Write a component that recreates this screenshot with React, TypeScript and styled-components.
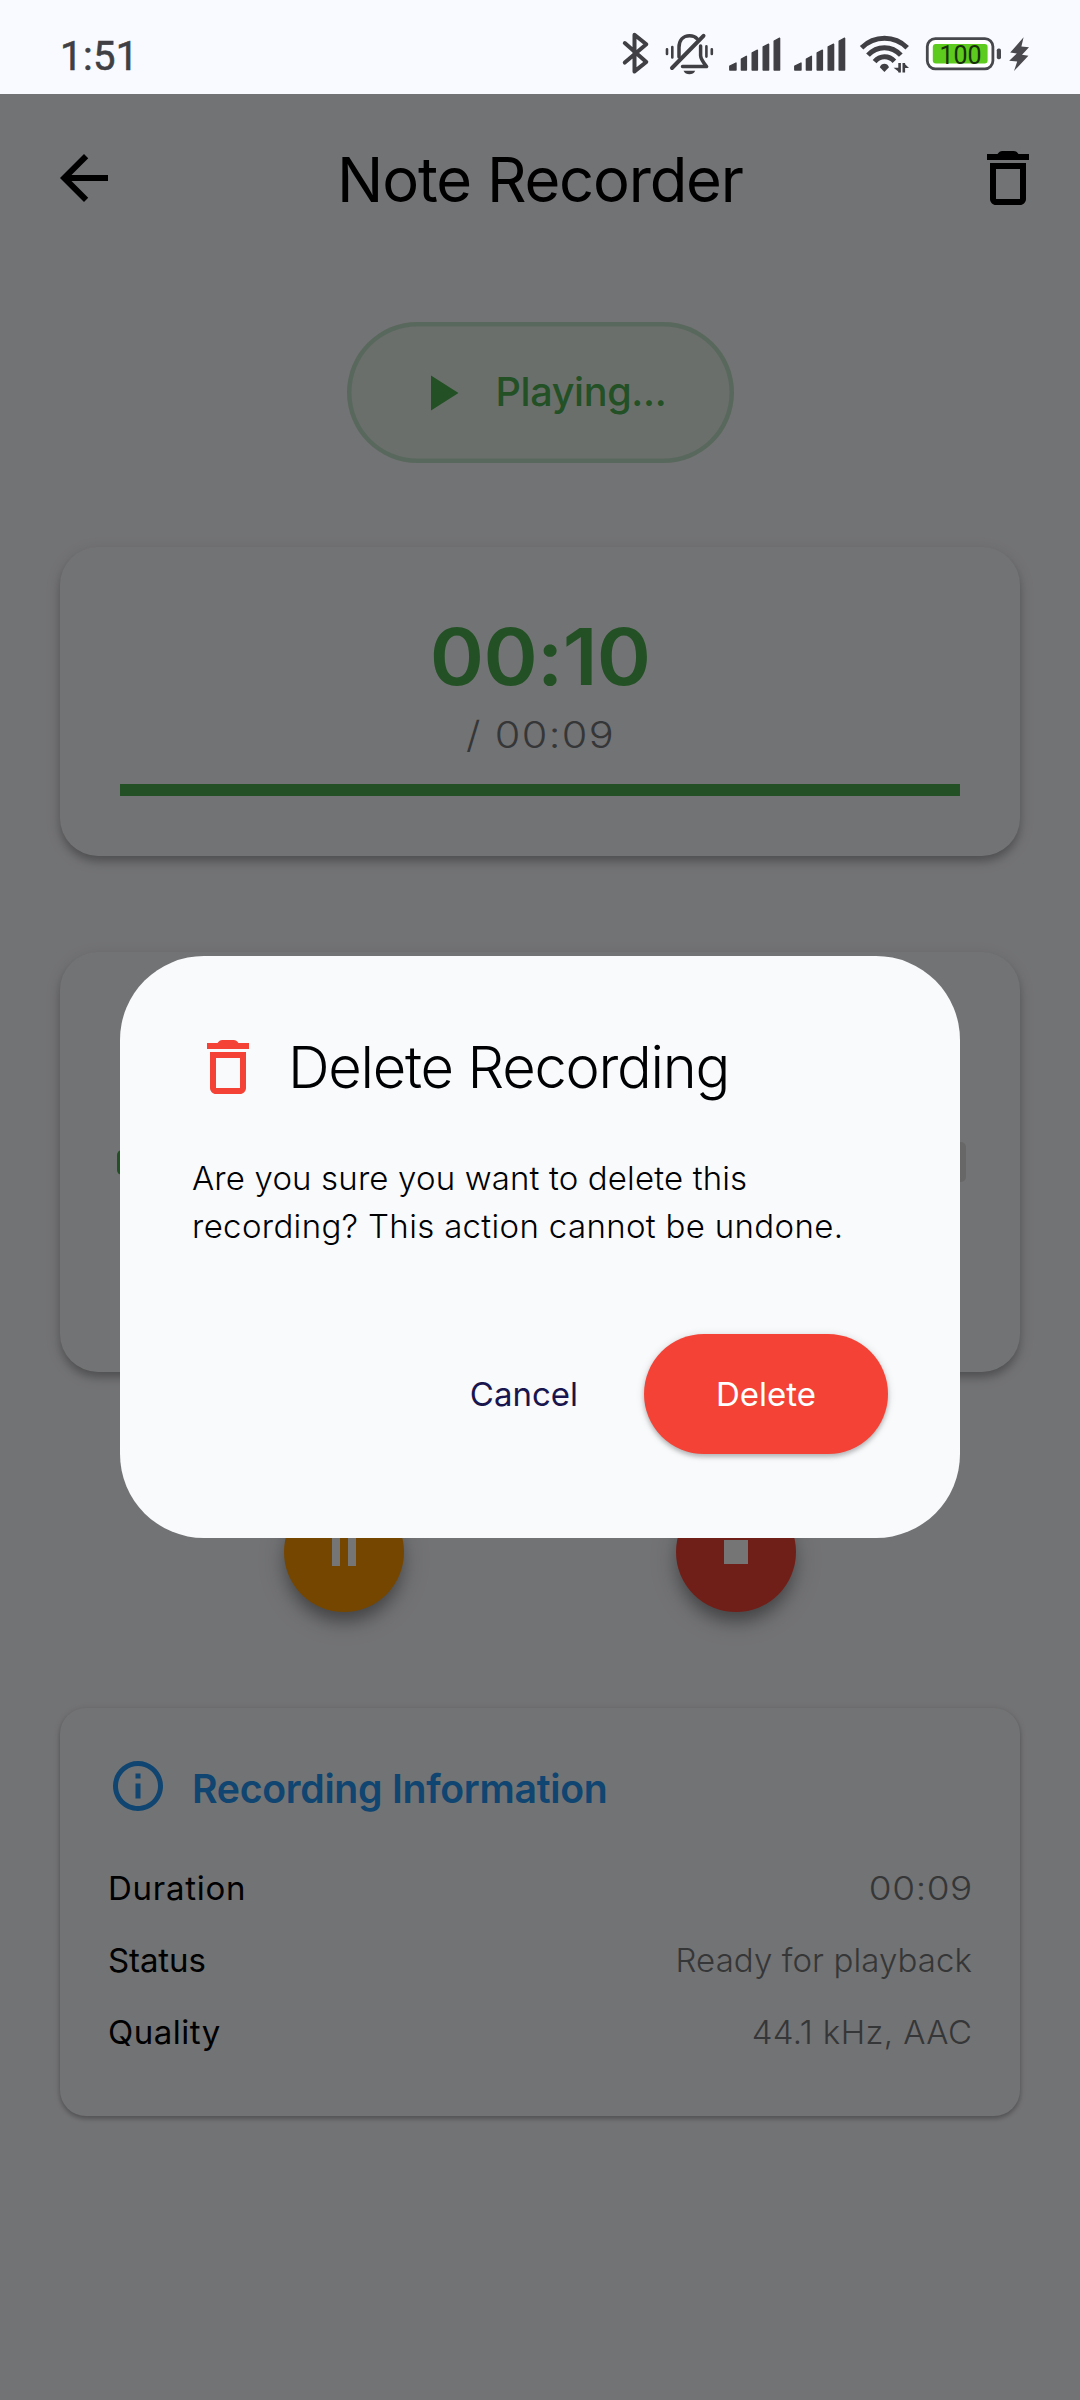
import React from "react";
import styled, { createGlobalStyle } from "styled-components";

const GlobalStyle = createGlobalStyle`
  *, *::before, *::after { box-sizing: border-box; }
  body { margin: 0; background: #f9faff; }
`;

const ink = "#3f3f44";

const Screen = styled.div`
  position: relative;
  display: flex;
  flex-direction: column;
  width: 1080px;
  height: 2400px;
  overflow: hidden;
  background: #f9fafe;
  font-family: "Inter", "Roboto", sans-serif;
  color: #000103;
`;

const Label = styled.span<{
  $size: number;
  $weight?: number;
  $track?: number;
  $line?: number;
  $color?: string;
  $stretch?: number;
  $origin?: string;
}>`
  display: block;
  margin-right: ${(p) => -(p.$track ?? 0)}px;
  font-size: ${(p) => p.$size}px;
  font-weight: ${(p) => p.$weight ?? 400};
  letter-spacing: ${(p) => p.$track ?? 0}px;
  line-height: ${(p) => (p.$line ? `${p.$line}px` : "1.2")};
  color: ${(p) => p.$color ?? "inherit"};
  white-space: pre;
  transform: ${(p) => (p.$stretch ? `scaleX(${p.$stretch})` : "none")};
  transform-origin: ${(p) => p.$origin ?? "center"};
`;

/* Status bar */

const StatusBar = styled.header`
  display: flex;
  justify-content: space-between;
  flex: none;
  height: 94px;
  padding: 32px 50px 0 60px;
  background: #f9faff;
`;

const Clock = styled.span`
  padding-top: 1px;
  font: 400 40px/48px "Roboto", sans-serif;
  letter-spacing: 0.4px;
  color: ${ink};
  -webkit-text-stroke: 0.6px ${ink};
`;

const StatusIcons = styled.div`
  display: flex;
  align-items: flex-start;
`;

const StatusGlyph = styled.svg<{ $gap?: number }>`
  display: block;
  height: 44px;
  margin-left: ${(p) => p.$gap ?? 0}px;
  overflow: visible;
`;

const Signal = ({ gap }: { gap: number }) => (
  <StatusGlyph $gap={gap} width="52" viewBox="0 0 52 44" fill={ink} stroke={ink} strokeWidth="1.4" strokeLinejoin="round">
    <path d="M0.8 38V34.2L7 31V38ZM12.4 38V27L17.4 24.3V38ZM23.2 38V20.8L28.4 18.2V38ZM34.2 38V14.8L39.6 12.2V38ZM45.2 38V9L50.6 6.2V38Z" />
  </StatusGlyph>
);

const StatusRow = () => (
  <StatusBar>
    <Clock>1:51</Clock>
    <StatusIcons>
      <StatusGlyph width="28" viewBox="0 0 28 44" fill="none" stroke={ink} strokeWidth="4" strokeLinecap="round" strokeLinejoin="round">
        <path d="M2.8 11L24.3 30L12.5 39.4V2.8L24.3 12.3L2.8 30.6" />
      </StatusGlyph>
      <StatusGlyph $gap={15} width="49" viewBox="0 0 49 44" fill="none" stroke={ink} strokeWidth="3.5" strokeLinecap="round" strokeLinejoin="round">
        <path d="M14 25V15.5C14 8.5 18 3.8 24.6 3.8C27.8 3.8 30.4 4.8 32.2 6.8" />
        <path d="M35.6 14V23.5C35.6 27 37.6 29.6 41.6 34.6H17.5" />
        <path d="M7 36L38.5 3.8" strokeWidth="4" />
        <path d="M2 17.2V22M7.3 15V25.4M41.4 14.4V24.6M46.8 17.2V22" strokeWidth="2.6" />
        <path d="M18.5 38.8H30.2C29 41.4 27 42.2 24.4 42.2S19.8 41.4 18.5 38.8Z" fill={ink} stroke="none" />
      </StatusGlyph>
      <Signal gap={15} />
      <Signal gap={13} />
      <StatusGlyph $gap={13} width="51" viewBox="0 0 51 44" fill="none" stroke={ink} strokeWidth="5">
        <path d="M2.6 15.8C15.5 3.2 35.5 3.2 48.2 15.8" />
        <path d="M9 23.2C18 13.2 32.8 13.2 41.8 23.2" />
        <path d="M15.6 29.6C21 23.2 29.8 23.2 35.4 29.2" />
        <path d="M20.8 35.2C22.4 30.6 28.4 30.6 30 35.2L25.4 40Z" fill={ink} stroke="none" />
        <path d="M40.6 31V40.6M44.8 31V40.6" strokeWidth="2.6" />
        <path d="M40.6 40.6L34.6 35.8H40.6ZM44.8 31L50 36H44.8Z" fill={ink} stroke="none" />
      </StatusGlyph>
      <StatusGlyph $gap={16} width="76" viewBox="0 0 76 44">
        <rect x="1.3" y="6.6" width="65.6" height="30.2" rx="8" fill="#fff" stroke="#47484d" strokeWidth="2.8" />
        <rect x="6.8" y="12" width="54.8" height="19.4" rx="3" fill="#5ccb1d" />
        <rect x="70.8" y="16.4" width="4.2" height="10.8" rx="1.8" fill="#47484d" />
        <text x="34.6" y="32" textAnchor="middle" fontFamily="Roboto, sans-serif" fontSize="25" fill="#18300b">100</text>
      </StatusGlyph>
      <StatusGlyph $gap={6} width="22" viewBox="0 0 22 44" fill="#4a4a4e">
        <path d="M15.6 5.2L13.4 14.6L21 15.2L14 22.8L20.4 23.8L6 39L9.2 29.6L1.2 28.8L8.8 21.4L2.2 20.6Z" />
      </StatusGlyph>
    </StatusIcons>
  </StatusBar>
);

/* Material glyphs */

const Icon = styled.svg<{ $size: number }>`
  display: block;
  flex: none;
  width: ${(p) => p.$size}px;
  height: ${(p) => p.$size}px;
  fill: currentColor;
`;

const TrashIcon = () => (
  <Icon $size={72} viewBox="0 0 24 24">
    <path d="M6 19c0 1.1.9 2 2 2h8c1.1 0 2-.9 2-2V7H6v12zM8 9h8v10H8V9zM15.5 4c-.5-.7-.9-1-1.6-1h-3.8c-.7 0-1.1.3-1.6 1H5v2h14V4h-3.5z" />
  </Icon>
);

/* Page */

const TopBar = styled.nav`
  display: flex;
  align-items: center;
  justify-content: space-between;
  flex: none;
  height: 168px;
  padding: 0 36px 0 48px;
`;

const Title = styled.h1`
  margin: 0;
  padding: 3px 11px 0 0;
`;

const Content = styled.main`
  display: flex;
  flex-direction: column;
  padding: 60px 60px 0;
`;

const StatusPill = styled.div`
  display: flex;
  align-items: center;
  align-self: center;
  gap: 25px;
  width: 387px;
  height: 141px;
  padding-left: 64px;
  border-radius: 71px;
  background: rgba(76, 175, 80, 0.1);
  box-shadow: inset 0 0 0 4.5px rgba(76, 175, 80, 0.23);
  color: #4caf50;
`;

const Card = styled.section<{ $height: number; $top: number; $low?: boolean }>`
  display: flex;
  flex-direction: column;
  height: ${(p) => p.$height}px;
  margin-top: ${(p) => p.$top}px;
  padding: ${(p) => (p.$low ? "48px" : "60px")};
  border-radius: ${(p) => (p.$low ? 26 : 38)}px;
  background: #f9fafc;
  box-shadow: ${(p) =>
    p.$low
      ? "0 3px 4px rgba(0,0,0,.2), 0 1px 7px rgba(0,0,0,.14)"
      : "0 6px 8px -1px rgba(0,0,0,.24), 0 4px 16px rgba(0,0,0,.12)"};
`;

const Times = styled.div`
  display: flex;
  flex-direction: column;
  align-items: center;
`;

const Progress = styled.div`
  height: 12px;
  margin-top: 21px;
  background: #4caf50;
`;

const Wave = styled.div`
  display: flex;
  align-items: center;
  justify-content: space-between;
  height: 300px;
  margin: 0 -6px 0 -3px;
`;

const WaveBar = styled.i<{ $height: number; $played: boolean }>`
  width: 12px;
  height: ${(p) => p.$height}px;
  border-radius: 5px;
  background: ${(p) => (p.$played ? "#4caf50" : "#e0e1e3")};
`;

const Controls = styled.div`
  display: flex;
  justify-content: center;
  gap: 272px;
  margin-top: 120px;
`;

const RoundButton = styled.button<{ $color: string }>`
  display: flex;
  align-items: center;
  justify-content: center;
  width: 120px;
  height: 120px;
  padding: 0;
  border: 0;
  border-radius: 50%;
  background: ${(p) => p.$color};
  color: #fff;
  box-shadow: 0 12px 16px -3px rgba(0, 0, 0, 0.3), 0 8px 28px rgba(0, 0, 0, 0.18);
`;

const InfoHeading = styled.div`
  display: flex;
  align-items: center;
  gap: 24px;
  height: 60px;
  margin-bottom: 36px;
  color: #2196f3;
`;

const HeadingText = styled.div`
  padding-top: 6px;
`;

const InfoRow = styled.div`
  display: flex;
  align-items: center;
  justify-content: space-between;
  height: 72px;
  padding-top: 1px;
`;

/* Dialog */

const Scrim = styled.div`
  position: absolute;
  inset: 94px 0 0;
  display: flex;
  align-items: center;
  justify-content: center;
  background: rgba(0, 0, 0, 0.54);
`;

const Dialog = styled.div`
  display: flex;
  flex-direction: column;
  width: 840px;
  height: 582px;
  padding: 75px 72px 84px;
  border-radius: 84px;
  background: #f9fafc;
`;

const DialogTitle = styled.div`
  display: flex;
  align-items: center;
  gap: 24px;
  height: 72px;
  margin-bottom: 51px;
`;

const DialogHeading = styled.h2`
  margin: 0;
  padding-top: 2px;
`;

const RedIcon = styled.span`
  color: #f44336;
`;

const Actions = styled.div`
  display: flex;
  align-items: center;
  justify-content: flex-end;
  gap: 30px;
  margin-top: auto;
`;

const TextButton = styled.button`
  height: 120px;
  padding: 1px 36px 0;
  border: 0;
  background: none;
  font-family: inherit;
  color: #19164f;
`;

const FilledButton = styled.button`
  display: flex;
  align-items: center;
  justify-content: center;
  width: 244px;
  height: 120px;
  padding: 1px 0 0;
  border: 0;
  border-radius: 60px;
  background: #f44336;
  font-family: inherit;
  color: #fff;
  box-shadow: 0 3px 4px rgba(0, 0, 0, 0.2), 0 1px 8px rgba(0, 0, 0, 0.14);
`;

const waveform = Array.from({ length: 40 }, (_, i) =>
  i === 0 ? 25 : i === 39 ? 40 : 40 + Math.round(70 * Math.abs(Math.sin(i * 0.7)))
);

const details = [
  { name: "Duration", nameTrack: 0.73, value: "00:09", valueTrack: 0.5, stretch: 1.12 },
  { name: "Status", nameTrack: -0.1, value: "Ready for playback", valueTrack: 0.1 },
  { name: "Quality", nameTrack: 0.5, value: "44.1 kHz, AAC", valueTrack: 0.4 },
];

export default function App() {
  return (
    <Screen>
      <GlobalStyle />
      <StatusRow />
      <TopBar>
        <Icon $size={72} viewBox="0 0 24 24">
          <path d="M20 11H7.83l5.59-5.59L12 4l-8 8 8 8 1.41-1.41L7.83 13H20v-2z" />
        </Icon>
        <Title>
          <Label $size={61.5} $track={-1.2}>Note Recorder</Label>
        </Title>
        <TrashIcon />
      </TopBar>

      <Content>
        <StatusPill>
          <Icon $size={60} viewBox="0 0 24 24">
            <path d="M8 5v14l11-7z" />
          </Icon>
          <Label $size={39.6} $weight={550} $track={-0.35}>Playing...</Label>
        </StatusPill>

        <Card $height={309} $top={84}>
          <Times>
            <Label $size={78.4} $weight={570} $track={-0.6} $line={99} $stretch={1.05} $color="#4caf50">00:10</Label>
            <Label $size={37} $weight={300} $track={1.2} $line={57} $stretch={1.12} $color="#757678">/ 00:09</Label>
          </Times>
          <Progress />
        </Card>

        <Card $height={420} $top={96}>
          <Wave>
            {waveform.map((h, i) => (
              <WaveBar key={i} $height={h} $played={i < 39} />
            ))}
          </Wave>
        </Card>

        <Controls>
          <RoundButton $color="#ff9800" aria-label="Pause">
            <Icon $size={48} viewBox="0 0 24 24">
              <path d="M6 19h4V5H6v14zm8-14v14h4V5h-4z" />
            </Icon>
          </RoundButton>
          <RoundButton $color="#f44336" aria-label="Stop">
            <Icon $size={48} viewBox="0 0 24 24">
              <path d="M6 6h12v12H6z" />
            </Icon>
          </RoundButton>
        </Controls>

        <Card $height={408} $top={96} $low>
          <InfoHeading>
            <Icon $size={60} viewBox="0 0 24 24">
              <path d="M11 7h2v2h-2zm0 4h2v6h-2zm1-9C6.48 2 2 6.48 2 12s4.48 10 10 10 10-4.48 10-10S17.52 2 12 2zm0 18c-4.41 0-8-3.59-8-8s3.59-8 8-8 8 3.59 8 8-3.59 8-8 8z" />
            </Icon>
            <HeadingText>
              <Label $size={39.2} $weight={600} $track={-0.28}>Recording Information</Label>
            </HeadingText>
          </InfoHeading>
          {details.map((d) => (
            <InfoRow key={d.name}>
              <Label $size={33} $track={d.nameTrack}>{d.name}</Label>
              <Label $size={33} $weight={300} $track={d.valueTrack} $stretch={d.stretch} $origin="right" $color="#757678">{d.value}</Label>
            </InfoRow>
          ))}
        </Card>
      </Content>

      <Scrim>
        <Dialog role="dialog">
          <DialogTitle>
            <RedIcon>
              <TrashIcon />
            </RedIcon>
            <DialogHeading>
              <Label $size={57.8} $weight={330} $track={-1.28}>Delete Recording</Label>
            </DialogHeading>
          </DialogTitle>
          <Label $size={33} $weight={300} $track={0.15} $line={48}>Are you sure you want to delete this</Label>
          <Label $size={33} $weight={300} $track={0.33} $line={48}>recording? This action cannot be undone.</Label>
          <Actions>
            <TextButton>
              <Label $size={33}>Cancel</Label>
            </TextButton>
            <FilledButton>
              <Label $size={33}>Delete</Label>
            </FilledButton>
          </Actions>
        </Dialog>
      </Scrim>
    </Screen>
  );
}
